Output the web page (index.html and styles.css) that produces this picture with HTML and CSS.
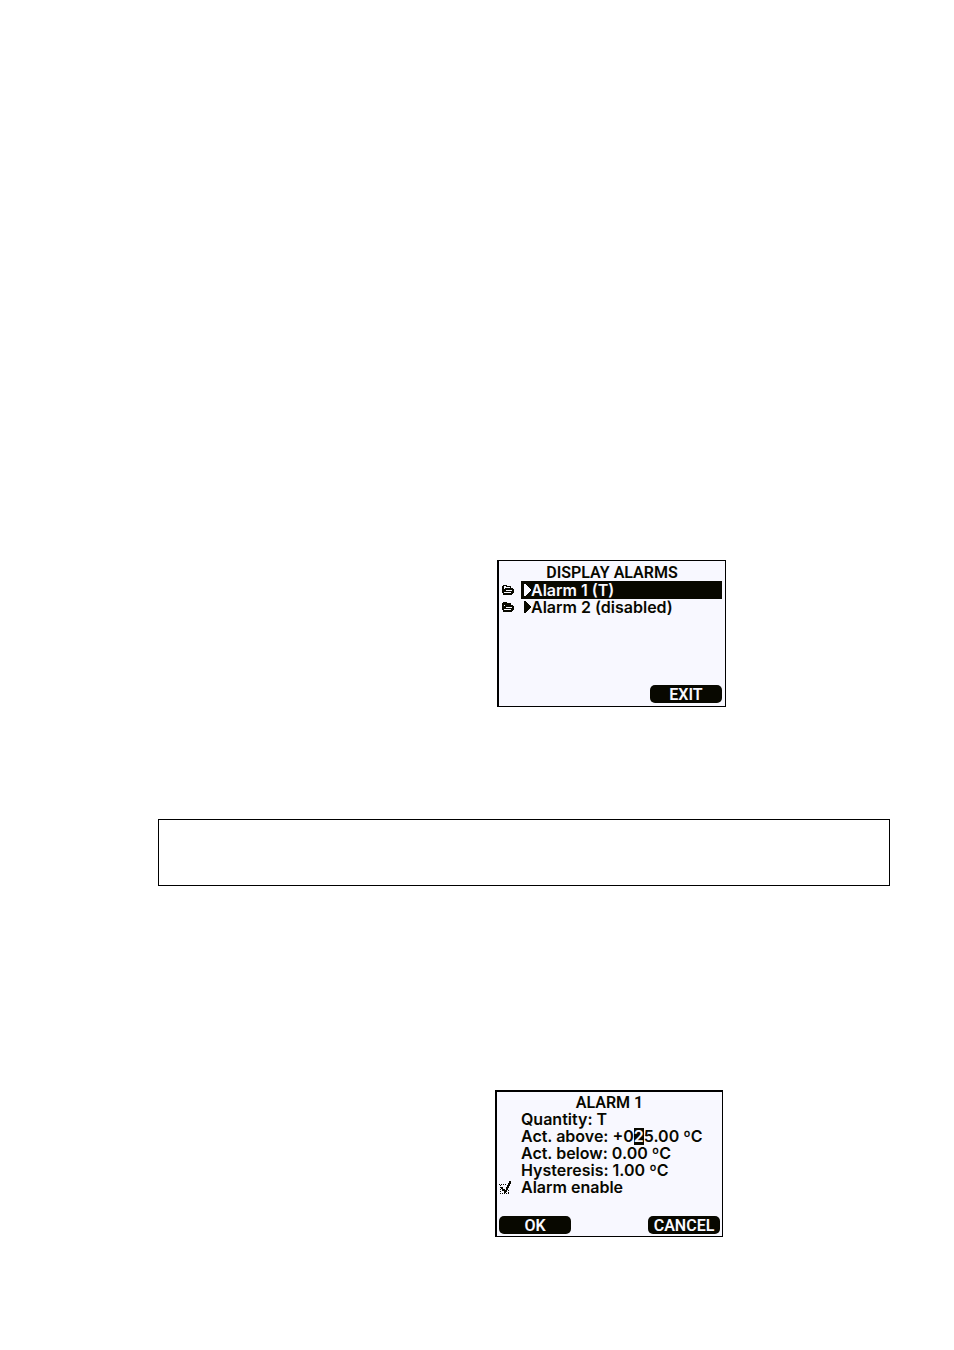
FILE: index.html
```
<!DOCTYPE html>
<html lang="en">
<head>
    <meta charset="UTF-8">
    <meta name="viewport" content="width=device-width, initial-scale=1.0">
    <title>Display Alarms</title>
    <link rel="stylesheet" href="styles.css">
</head>
<body>
    <main class="page">
        <section class="screen alarm-list">
            <h2 class="title">DISPLAY ALARMS</h2>
            <ul class="menu">
                <li class="row">
                    <svg class="folder" viewBox="0 0 12 10" aria-hidden="true"><path d="M0 1H1V0H5V1H9V3H8V2H4V1H2V8H0ZM3 3H11V4H12V8H11V9H10V10H1V8H9V7H4V6H10V5H4V7H2V4H3Z"/></svg>
                    <button class="item selected" type="button"><svg class="arrow" viewBox="0 0 8 12" aria-hidden="true"><path d="M1 0H2L8 6L2 12H1Z"/></svg>Alarm 1 (T)</button>
                </li>
                <li class="row">
                    <svg class="folder" viewBox="0 0 12 10" aria-hidden="true"><path d="M0 1H1V0H5V1H9V3H2V8H0ZM3 3H11V4H12V8H11V9H10V10H1V8H9V7H4V6H10V5H4V7H2V4H3Z"/></svg>
                    <button class="item" type="button"><svg class="arrow" viewBox="0 0 8 12" aria-hidden="true"><path d="M1 0H2L8 6L2 12H1Z"/></svg>Alarm 2 (disabled)</button>
                </li>
            </ul>
            <div class="keys">
                <button class="key last" type="button">EXIT</button>
            </div>
        </section>

        <div class="note"></div>

        <section class="screen alarm-edit">
            <h2 class="title">ALARM 1</h2>
            <div class="fields">
                <p>Quantity: T</p>
                <p>Act. above: +0<mark>2</mark>5.00 ºC</p>
                <p>Act. below: 0.00 ºC</p>
                <p>Hysteresis: 1.00 ºC</p>
            </div>
            <div class="enable">
                <span class="tick">
                    <input type="checkbox" id="alarm-enable" checked>
                    <svg viewBox="0 0 13 14" aria-hidden="true"><path class="box" d="M0 3H8M1 4V13M1 12H10M9 12V8"/><path class="check" d="M2 6H4V8H6V9H7V6H8V4H9V2H10V0H12V3H11V5H10V7H9V9H8V11H7V12H5V10H3V8H2Z"/></svg>
                </span>
                <label for="alarm-enable">Alarm enable</label>
            </div>
            <div class="keys">
                <button class="key" type="button">OK</button>
                <button class="key last" type="button">CANCEL</button>
            </div>
        </section>
    </main>
</body>
</html>
```

FILE: styles.css
```
* {
    box-sizing: border-box;
}

body {
    margin: 0;
    background-color: #fff;
    color: #080800;
    font-family: Inter, "Liberation Sans", sans-serif;
    font-size: 16px;
    font-weight: 600;
    line-height: 17px;
}

.page {
    padding: 560px 64px 113px 158px;
}

.screen {
    display: flex;
    flex-direction: column;
    width: 229px;
    min-height: 147px;
    padding: 3px;
    border: 1px solid #000;
    border-left-width: 2px;
    background-color: #f8f8ff;
}

.alarm-list {
    margin-left: 339px;
}

.alarm-edit {
    width: 228px;
    margin-left: 337px;
    padding: 2px;
    border-top-width: 2px;
}

.title {
    margin: 0;
    font-family: Roboto, "Liberation Sans", sans-serif;
    font-size: 16px;
    font-weight: 600;
    line-height: 17px;
    text-align: center;
}

.menu {
    margin: 0;
    padding: 0;
    list-style: none;
}

.row {
    display: flex;
    align-items: center;
}

.folder {
    width: 12px;
    height: 10px;
    margin-right: 7px;
    fill: #080800;
    shape-rendering: crispEdges;
}

.item {
    display: flex;
    flex: 1;
    align-items: center;
    height: 16px;
    padding: 0 2px;
    border: none;
    background: none;
    color: inherit;
    font: inherit;
    cursor: pointer;
}

.selected {
    height: 18px;
    background-color: #080800;
    color: #f8f8ff;
}

.arrow {
    width: 8px;
    height: 12px;
    fill: currentColor;
    shape-rendering: crispEdges;
}

.keys {
    display: flex;
    margin-top: auto;
}

.key {
    width: 72px;
    height: 18px;
    padding: 0;
    border: none;
    border-radius: 5px;
    background-color: #080800;
    color: #f8f8ff;
    font: inherit;
    font-family: Roboto, "Liberation Sans", sans-serif;
    cursor: pointer;
}

.last {
    margin-left: auto;
}

.note {
    min-height: 67px;
    margin: 112px 0 204px;
    border: 1px solid #000;
}

.fields {
    padding-left: 22px;
}

.fields p {
    margin: 0;
}

mark {
    display: inline-block;
    background-color: #080800;
    color: #f8f8ff;
}

.enable {
    display: flex;
    align-items: center;
}

.tick {
    position: relative;
    width: 13px;
    height: 14px;
    margin-right: 9px;
}

.tick input {
    width: 13px;
    height: 14px;
    margin: 0;
    appearance: none;
}

.tick svg {
    position: absolute;
    inset: 0;
    pointer-events: none;
    shape-rendering: crispEdges;
}

.box {
    fill: none;
    stroke: #080800;
    stroke-dasharray: 1 1;
}

.check {
    fill: #080800;
}
```
